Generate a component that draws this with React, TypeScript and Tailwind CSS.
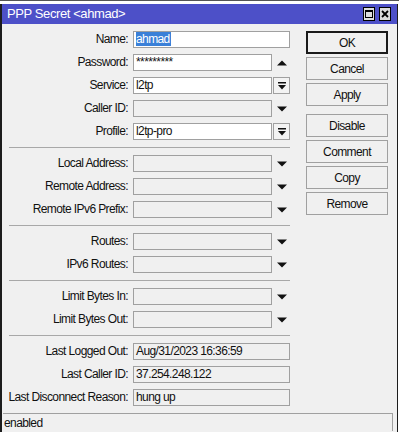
import React from "react";

const font = { fontFamily: '"Liberation Sans", Arial, sans-serif' };

type Kind = "text" | "up" | "combo" | "drop" | "info";

interface Row {
  label: string;
  kind: Kind;
  value?: string;
  white?: boolean;
  selected?: boolean;
}

const groups: Row[][] = [
  [
    { label: "Name:", kind: "text", value: "ahmad", white: true, selected: true },
    { label: "Password:", kind: "up", value: "*********", white: true },
    { label: "Service:", kind: "combo", value: "l2tp", white: true },
    { label: "Caller ID:", kind: "drop" },
    { label: "Profile:", kind: "combo", value: "l2tp-pro", white: true },
  ],
  [
    { label: "Local Address:", kind: "drop" },
    { label: "Remote Address:", kind: "drop" },
    { label: "Remote IPv6 Prefix:", kind: "drop" },
  ],
  [
    { label: "Routes:", kind: "drop" },
    { label: "IPv6 Routes:", kind: "drop" },
  ],
  [
    { label: "Limit Bytes In:", kind: "drop" },
    { label: "Limit Bytes Out:", kind: "drop" },
  ],
  [
    { label: "Last Logged Out:", kind: "info", value: "Aug/31/2023 16:36:59" },
    { label: "Last Caller ID:", kind: "info", value: "37.254.248.122" },
    { label: "Last Disconnect Reason:", kind: "info", value: "hung up" },
  ],
];

const buttons = ["OK", "Cancel", "Apply", "Disable", "Comment", "Copy", "Remove"];

function DownTri() {
  return (
    <svg width="10" height="6" viewBox="0 0 10 6">
      <path d="M0 0.5 L10 0.5 L5 5.5 Z" fill="#111" />
    </svg>
  );
}

function UpTri() {
  return (
    <svg width="10" height="6" viewBox="0 0 10 6">
      <path d="M0 5.5 L10 5.5 L5 0.5 Z" fill="#111" />
    </svg>
  );
}

function ComboIcon() {
  return (
    <svg width="8" height="8" viewBox="0 0 8 8">
      <rect x="0" y="0" width="8" height="1.5" fill="#111" />
      <path d="M0 3 L8 3 L4 7.5 Z" fill="#111" />
    </svg>
  );
}

function Field({ row }: { row: Row }) {
  const box = row.white ? "bg-white" : "bg-[#f0f0f0]";
  const text = (
    <span className="pl-[2px] leading-[15px] whitespace-nowrap">
      {row.selected ? (
        <span className="bg-[#3a80d8] text-white pr-[1px]">{row.value}</span>
      ) : (
        row.value
      )}
    </span>
  );
  if (row.kind === "text" || row.kind === "info") {
    return (
      <div className={`w-[157px] h-[17px] border border-[#a0a0a0] ${box} flex items-center`}>
        {text}
      </div>
    );
  }
  return (
    <div className="flex items-center">
      <div className={`w-[139px] h-[17px] border border-[#a0a0a0] ${box} flex items-center`}>
        {text}
      </div>
      {row.kind === "combo" ? (
        <div className="ml-[1px] w-[17px] h-[17px] border border-[#a0a0a0] bg-[#f3f3f3] flex items-center justify-center">
          <ComboIcon />
        </div>
      ) : (
        <div className="ml-[1px] w-[17px] h-[17px] flex items-center justify-center">
          {row.kind === "up" ? <UpTri /> : <DownTri />}
        </div>
      )}
    </div>
  );
}

export default function App() {
  return (
    <div
      className="w-[399px] h-[432px] bg-white overflow-hidden text-[12px] tracking-[-0.6px] text-[#111]"
      style={font}
    >
      <div className="h-[4px] border-t border-[#555] bg-white" />
      <div className="w-[398px] h-[428px] bg-[#f0f0f0] border-l-2 border-r border-[#1c1c1c] flex flex-col">
        {/* barra de titulo */}
        <div className="h-[20px] bg-[#4d50c8] flex items-center justify-between pl-[5px] pr-[6px]">
          <span className="text-white text-[13px] tracking-[-0.4px] leading-[20px]">PPP Secret &lt;ahmad&gt;</span>
          <div className="flex gap-[4px]">
            <div className="w-[12px] h-[14px] bg-[#dcdcdc] border border-black flex items-center justify-center">
              <div className="w-[8px] h-[8px] border border-black border-t-2" />
            </div>
            <div className="w-[12px] h-[14px] bg-[#dcdcdc] border border-black flex items-center justify-center">
              <svg width="8" height="8" viewBox="0 0 8 8">
                <path d="M1 1 L7 7 M7 1 L1 7" stroke="#000" strokeWidth="1.8" />
              </svg>
            </div>
          </div>
        </div>

        <div className="flex pt-[7px]">
          {/* formulario */}
          <div className="w-[288px] flex flex-col">
            {groups.map((g, gi) => (
              <div key={gi}>
                {gi > 0 && <div className="ml-[7px] w-[281px] h-px bg-[#a8a8a8] my-[7px]" />}
                <div className="flex flex-col gap-[6px]">
                  {g.map((row) => (
                    <div key={row.label} className="flex items-center h-[17px]">
                      <div className="w-[126px] text-right whitespace-nowrap leading-[17px]">{row.label}</div>
                      <div className="ml-[5px]">
                        <Field row={row} />
                      </div>
                    </div>
                  ))}
                </div>
              </div>
            ))}
          </div>

          {/* botones */}
          <div className="ml-[16px] w-[82px] flex flex-col gap-[3px]">
            {buttons.map((b, i) => (
              <div
                key={b}
                className={`h-[23px] flex items-center justify-center bg-[#f0f0f0] ${
                  i === 0 ? "border-2 border-[#1a1a1a]" : "border border-[#a0a0a0]"
                } ${i === 3 ? "mt-[5px]" : ""}`}
              >
                {b}
              </div>
            ))}
          </div>
        </div>

        {/* barra de estado */}
        <div className="mt-[7px] ml-[1px] w-[390px] h-[18px] border-t border-r border-[#a0a0a0] flex items-center pl-[1px]">
          enabled
        </div>
      </div>
    </div>
  );
}
